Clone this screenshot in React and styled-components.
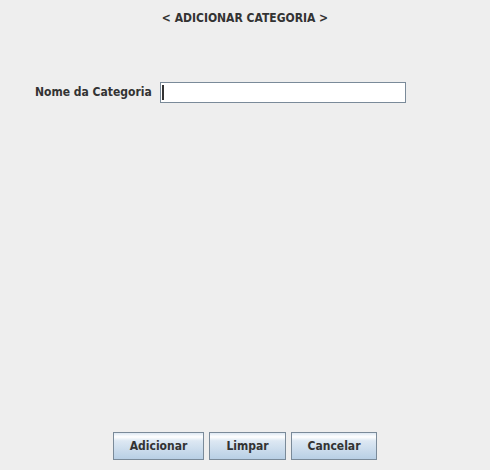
import React from "react";
import styled, { createGlobalStyle } from "styled-components";

const Global = createGlobalStyle`
    html, body {
        margin:0;
        padding:0;
        background-color:#eeeeee;
    }
    * {
        box-sizing:border-box;
    }
`

const Window = styled.div`
    width:490px;
    height:470px;
    display:flex;
    flex-direction:column;
    background-color:#eeeeee;
    font-family:"DejaVu Sans Condensed", "DejaVu Sans", sans-serif;
    font-weight:bold;
    font-size:12px;
    line-height:15px;
    color:#333333;
`

const Title = styled.div`
    margin-top:11px;
    text-align:center;
`

const FormRow = styled.div`
    margin-top:56px;
    padding-left:35px;
    display:flex;
    align-items:center;
`

const Label = styled.div`
    width:125px;
    white-space:nowrap;
`

const Field = styled.div`
    width:246px;
    height:21px;
    background-color:#fff;
    border:1px solid #7a8a99;
    display:flex;
    align-items:center;
    padding-left:1px;
`

const Caret = styled.span`
    width:2px;
    height:15px;
    background-color:#333;
`

const ButtonBar = styled.div`
    margin-top:auto;
    margin-bottom:10px;
    display:flex;
    justify-content:center;
    gap:5px;
`

const Button = styled.button`
    width:${p => p.w}px;
    height:28px;
    padding:0;
    border:1px solid #7a8a99;
    background:linear-gradient(#dde8f3 0%, #ffffff 15%, #dde8f3 30%, #b8cfe5 100%);
    font:inherit;
    color:#333333;
`

export default () => {
    return (
        <Window>
            <Global />
            <Title>&lt; ADICIONAR CATEGORIA &gt;</Title>
            <FormRow>
                <Label>Nome da Categoria</Label>
                <Field>
                    <Caret />
                </Field>
            </FormRow>
            <ButtonBar>
                <Button w={91}>Adicionar</Button>
                <Button w={77}>Limpar</Button>
                <Button w={86}>Cancelar</Button>
            </ButtonBar>
        </Window>
    )
}
